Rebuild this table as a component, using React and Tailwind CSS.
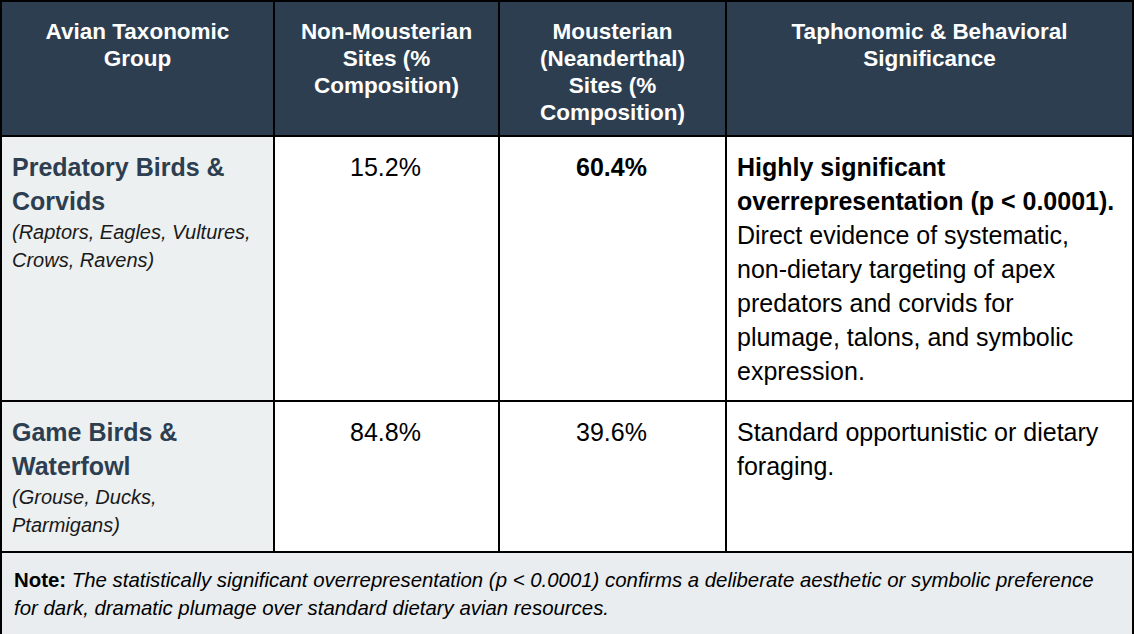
export default function App() {
  const head =
    "bg-[#2c3e50] text-white font-bold text-[22.5px] leading-[27px] text-center px-[14px] pt-[16px] pb-[9px]";
  const cell = "bg-white text-black text-[25px] leading-[34px] pl-[10px] pr-3 pt-[13px] pb-[12px]";
  const first = "bg-[#ecf0f1] pl-[10px] pr-3 pt-[13px] pb-[12px]";
  const title = "text-[#2c3e50] font-bold text-[25px] leading-[34px]";
  const sub = "italic text-[#1a1a1a] text-[20px] leading-[28px]";

  return (
    <div className="w-[1134px] bg-white font-['Liberation_Sans',Arial,Helvetica,sans-serif]">
      <div className="grid grid-cols-[271px_223px_225px_405px] gap-[2px] bg-black p-[2px]">
        <div className={head}>Avian Taxonomic Group</div>
        <div className={head}>Non-Mousterian Sites (% Composition)</div>
        <div className={head}>Mousterian (Neanderthal) Sites (% Composition)</div>
        <div className={head}>Taphonomic &amp; Behavioral Significance</div>

        <div className={first}>
          <div className={title}>Predatory Birds &amp; Corvids</div>
          <div className={sub}>(Raptors, Eagles, Vultures, Crows, Ravens)</div>
        </div>
        <div className={cell + " text-center"}>15.2%</div>
        <div className={cell + " text-center font-bold"}>60.4%</div>
        <div className={cell}>
          <span className="font-bold">Highly significant overrepresentation (p &lt; 0.0001).</span>{" "}
          Direct evidence of systematic, non-dietary targeting of apex predators and corvids for
          plumage, talons, and symbolic expression.
        </div>

        <div className={first}>
          <div className={title}>Game Birds &amp; Waterfowl</div>
          <div className={sub}>(Grouse, Ducks, Ptarmigans)</div>
        </div>
        <div className={cell + " text-center"}>84.8%</div>
        <div className={cell + " text-center"}>39.6%</div>
        <div className={cell}>Standard opportunistic or dietary foraging.</div>

        <div className="col-span-4 bg-[#e9edef] text-black text-[20.4px] leading-[28px] pl-[12px] pr-[28px] pt-[13px] pb-[13px]">
          <span className="font-bold">Note:</span>{" "}
          <span className="italic">
            The statistically significant overrepresentation (p &lt; 0.0001) confirms a deliberate
            aesthetic or symbolic preference for dark, dramatic plumage over standard dietary avian
            resources.
          </span>
        </div>
      </div>
    </div>
  );
}
